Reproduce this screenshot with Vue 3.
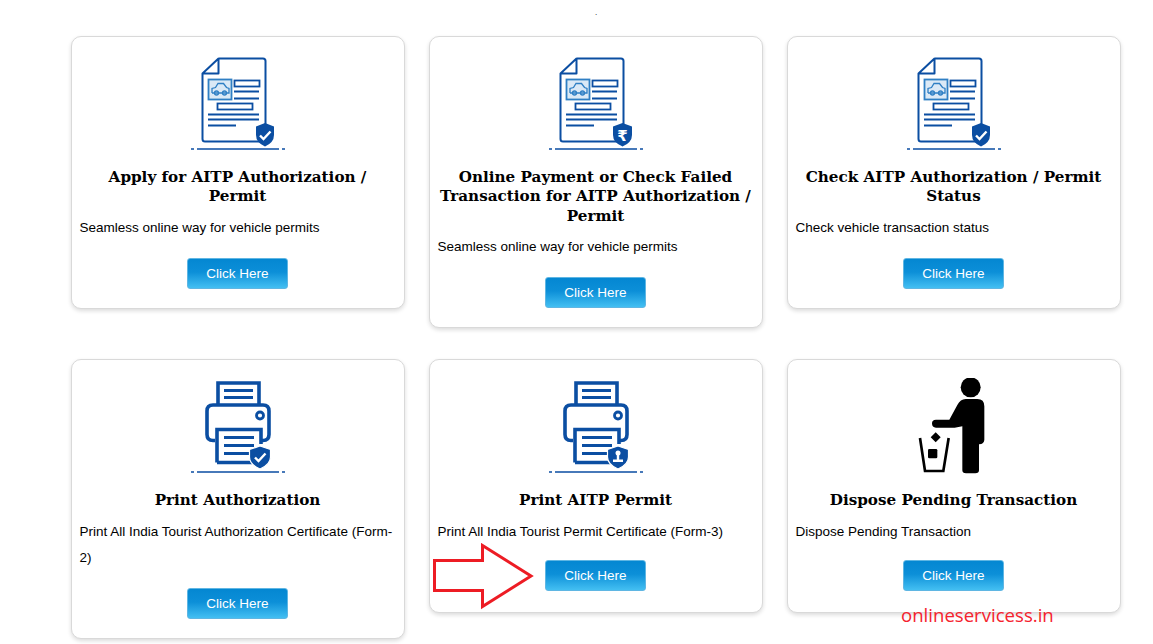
<template>
  <div class="page">
    <div class="top-dot">.</div>

    <div class="card-grid">
      <div v-for="card in cards" :key="card.title" class="service-card">
        <!-- document icon -->
        <svg v-if="card.icon === 'doc'" class="card-icon" viewBox="0 0 96 96">
          <path class="doc-line" d="M28.500 3.500H73Q75.500 3.500 75.500 6V84Q75.500 86.500 73 86.500H15Q12.500 86.500 12.500 84V18.500L28.500 3.500V18.500H12.500" />
          <rect x="18.500" y="24.500" width="23" height="20" fill="#dbe9f6" stroke="#2f7fc4" stroke-width="1.800" />
          <path class="car" d="M22 38V33.500L25.500 32.500L28 28.500H33.500L36.500 32.500L39 33.500V38H22" />
          <circle class="car" cx="26.500" cy="38" r="2" />
          <circle class="car" cx="34.500" cy="38" r="2" />
          <rect class="doc-thin" x="44.500" y="25.500" width="25" height="6" />
          <rect class="doc-thin" x="27.500" y="48.500" width="35" height="6" />
          <path class="doc-thin" d="M44 36.500H69M44 43.500H69M18 59.500H69M18 64.500H69M18 70.500H46" />
          <path class="shield" :d="card.shieldPath" />
          <path v-if="card.badge === 'check'" class="tick" d="M70 80.500L73.500 84L80.500 76.500" />
          <text v-else class="rupee" x="74.500" y="86" text-anchor="middle">₹</text>
          <path class="base-line" d="M1 94H4M7 94H89M92 94H95" />
        </svg>

        <!-- printer icon -->
        <svg v-else-if="card.icon === 'printer'" class="card-icon" viewBox="0 0 96 96">
          <path class="print-line" d="M28 26V5H69V26" />
          <path class="print-line" d="M25 62.500H23Q17 62.500 17 56.500V33Q17 27 23 27H73Q79 27 79 33V56.500Q79 62.500 73 62.500H71" />
          <path class="print-line" d="M27 84.500V51.500H71V66M27 84.500H62" />
          <path class="print-thin" d="M34 12.500H63M34 19.500H63M34 59.500H64M34 67.500H64M34 75.500H60" />
          <circle cx="70" cy="37.500" r="3.500" fill="#fff" stroke="#0b4ea2" stroke-width="2.800" />
          <path class="shield-outline" d="M70 68L80.500 71.500V79Q80.500 86.500 70 91Q59.500 86.500 59.500 79V71.500Z" />
          <path v-if="card.badge === 'check'" class="tick" d="M65 79.500L68.500 83L75.500 75.500" />
          <g v-else fill="#fff">
            <circle cx="70" cy="75" r="2.500" />
            <path d="M68.800 77H71.200V81.500H75V84H65V81.500H68.800Z" />
          </g>
          <path class="base-line" d="M1 94H4M7 94H89M92 94H95" />
        </svg>

        <!-- person and bin -->
        <svg v-else class="card-icon" viewBox="18 27 288 288">
          <circle cx="212" cy="55" r="30" fill="#000" />
          <path d="M197 90H232Q253 90 253 112V212Q253 224 237 226V304Q237 313 226 313H198Q187 313 187 304V172L164 176H108Q96 176 96 163Q96 152 108 152H148L172 108Q181 90 197 90Z" fill="#000" />
          <path d="M60 207L75 306H130L146 207" fill="none" stroke="#000" stroke-width="8" />
          <path d="M107 190L122 205L107 220L92 205Z" fill="#000" />
          <rect x="84" y="240" width="28" height="28" rx="4" fill="#000" />
        </svg>

        <h3 class="card-title">{{ card.title }}</h3>
        <p class="card-text">{{ card.text }}</p>
        <button class="click-btn">Click Here</button>
      </div>
    </div>

    <!-- red annotation arrow -->
    <svg class="arrow" width="104" height="68" viewBox="0 0 104 68">
      <path d="M2.500 17.500H50.500V2.500L99 33L50.500 63.500V47.500H2.500Z" fill="#fff" stroke="#ed1c24" stroke-width="3" />
    </svg>
    <div class="watermark">onlineservicess.in</div>
  </div>
</template>

<script setup>
const checkShield = 'M75 68L84 71.500V80Q84 87.500 75 91.500Q66 87.500 66 80V71.500Z'
const rupeeShield = 'M74.500 68L84 71.500V80Q84 87.500 74.500 91.500Q65 87.500 65 80V71.500Z'

const cards = [
  {
    icon: 'doc',
    badge: 'check',
    shieldPath: checkShield,
    title: 'Apply for AITP Authorization / Permit',
    text: 'Seamless online way for vehicle permits',
  },
  {
    icon: 'doc',
    badge: 'rupee',
    shieldPath: rupeeShield,
    title: 'Online Payment or Check Failed Transaction for AITP Authorization / Permit',
    text: 'Seamless online way for vehicle permits',
  },
  {
    icon: 'doc',
    badge: 'check',
    shieldPath: checkShield,
    title: 'Check AITP Authorization / Permit Status',
    text: 'Check vehicle transaction status',
  },
  {
    icon: 'printer',
    badge: 'check',
    title: 'Print Authorization',
    text: 'Print All India Tourist Authorization Certificate (Form-2)',
  },
  {
    icon: 'printer',
    badge: 'stamp',
    title: 'Print AITP Permit',
    text: 'Print All India Tourist Permit Certificate (Form-3)',
  },
  {
    icon: 'person',
    title: 'Dispose Pending Transaction',
    text: 'Dispose Pending Transaction',
  },
]
</script>

<style>
html,
body {
  background: #fff;
  overflow: hidden;
}
</style>

<style scoped>
.page {
  position: relative;
  width: 1153px;
  height: 644px;
  overflow: hidden;
  font-family: 'Liberation Sans', Arial, sans-serif;
  color: #000;
}

.top-dot {
  height: 35.500px;
  text-align: center;
  font-size: 8px;
  line-height: 26px;
  padding-left: 39px;
  box-sizing: border-box;
}

.card-grid {
  display: grid;
  grid-template-columns: repeat(3, 334px);
  column-gap: 24px;
  row-gap: 31px;
  align-items: start;
  padding-left: 70.500px;
}

.service-card {
  box-sizing: border-box;
  padding: 18px 8px 19px;
  background: #fff;
  border: 1px solid #d9d9d9;
  border-radius: 10px;
  box-shadow: 0 2px 4px rgba(0, 0, 0, 0.14);
  display: flex;
  flex-direction: column;
}

/* last two cards sit a little tighter above the button */
.service-card:nth-child(n + 5) {
  padding-bottom: 21px;
}

.service-card:nth-child(n + 5) .click-btn {
  margin-top: 15px;
}

.card-icon {
  display: block;
  width: 96px;
  height: 96px;
  margin: 0 auto;
}

.card-title {
  margin: 17px 0 0;
  font-family: 'DejaVu Serif', Georgia, serif;
  font-size: 15.200px;
  font-weight: 700;
  line-height: 19.500px;
  text-align: center;
}

.card-text {
  margin: 8px 0 0;
  font-size: 13.500px;
  line-height: 26px;
}

.click-btn {
  align-self: center;
  width: 101px;
  height: 31px;
  margin-top: 17px;
  padding: 0;
  border: 1px solid #5fb6e3;
  border-radius: 3px;
  background: linear-gradient(to bottom, #0487d2 0%, #0c8fd8 45%, #43bff2 100%);
  color: #fff;
  font-family: inherit;
  font-size: 13.500px;
}

.doc-line,
.doc-thin,
.print-line,
.print-thin,
.base-line {
  fill: none;
  stroke: #0b4ea2;
}

.base-line {
  stroke-width: 1.500;
}

.doc-line {
  stroke-width: 2;
  stroke-linejoin: round;
}

.doc-thin {
  stroke-width: 1.800;
  fill: #fff;
}

.car {
  fill: none;
  stroke: #2f7fc4;
  stroke-width: 1.300;
}

.print-line {
  stroke-width: 3.600;
}

.print-thin {
  stroke-width: 3;
}

.shield,
.shield-outline {
  fill: #0b4ea2;
}

.shield-outline {
  stroke: #fff;
  stroke-width: 1.200;
}

.tick {
  fill: none;
  stroke: #fff;
  stroke-width: 2.400;
}

.rupee {
  fill: #fff;
  font-family: 'DejaVu Sans', sans-serif;
  font-size: 15px;
  font-weight: 700;
}

.arrow {
  position: absolute;
  left: 432px;
  top: 543px;
}

.watermark {
  position: absolute;
  left: 901px;
  top: 602px;
  font-family: 'Open Sans', 'Noto Sans', sans-serif;
  font-size: 18.600px;
  line-height: 26px;
  color: #f5222d;
}
</style>
